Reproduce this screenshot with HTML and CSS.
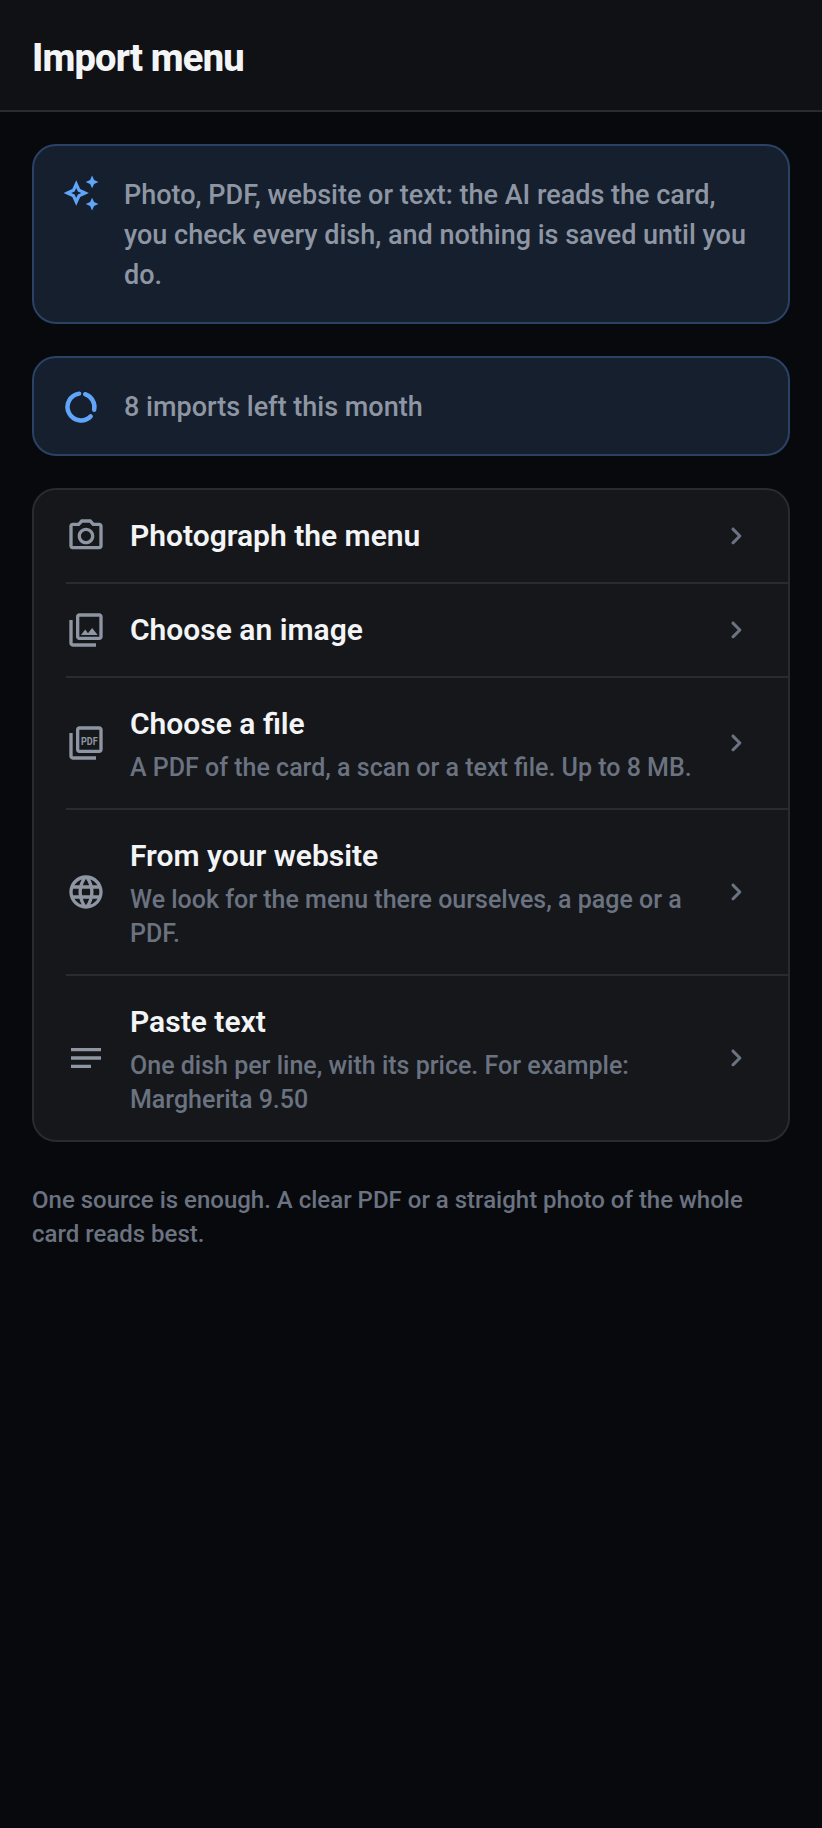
FILE: index.html
```html
<!DOCTYPE html>
<html lang="en">
<head>
    <meta charset="UTF-8">
    <meta name="viewport" content="width=device-width, initial-scale=1.0">
    <title>Import menu</title>
    <link rel="stylesheet" href="styles.css">
</head>
<body>
    <header class="app-bar">
        <h1>Import menu</h1>
    </header>

    <main class="content">
        <section class="notice">
            <svg class="notice-icon" viewBox="0 0 24 24"><path d="M19 9l1.25-2.75L23 5l-2.75-1.25L19 1l-1.25 2.75L15 5l2.75 1.25L19 9zm-7.5.5L9 4 6.5 9.5 1 12l5.5 2.5L9 20l2.5-5.5L17 12l-5.5-2.5zM9.99 12.99L9 15.17l-.99-2.18L5.83 12l2.18-.99L9 8.83l.99 2.18 2.18.99-2.18.99zM19 15l-1.25 2.75L15 19l2.75 1.25L19 23l1.25-2.75L23 19l-2.75-1.25L19 15z"/></svg>
            <p>Photo, PDF, website or text: the AI reads the card, you check every dish, and nothing is saved until you do.</p>
        </section>

        <section class="notice notice-center">
            <svg class="notice-icon ring" viewBox="0 0 24 24"><path d="M14.63 3.92A8.5 8.5 0 0 1 20.31 13.77"/><path d="M18.11 17.9A8.5 8.5 0 1 1 10.82 3.58"/></svg>
            <p>8 imports left this month</p>
        </section>

        <section class="sources">
            <a class="source">
                <svg class="source-icon" viewBox="0 0 24 24"><path d="M14.12 4l1.83 2H20v12H4V6h4.05l1.83-2h4.24M15 2H9L7.17 4H4c-1.1 0-2 .9-2 2v12c0 1.1.9 2 2 2h16c1.1 0 2-.9 2-2V6c0-1.1-.9-2-2-2h-3.17L15 2zm-3 7c1.65 0 3 1.35 3 3s-1.35 3-3 3-3-1.35-3-3 1.35-3 3-3m0-2c-2.76 0-5 2.24-5 5s2.24 5 5 5 5-2.24 5-5-2.24-5-5-5z"/></svg>
                <div class="source-text">
                    <h2>Photograph the menu</h2>
                </div>
                <svg class="chevron" viewBox="0 0 24 24"><path d="M9.29 6.71c-.39.39-.39 1.02 0 1.41L13.17 12l-3.88 3.88c-.39.39-.39 1.02 0 1.41.39.39 1.02.39 1.41 0l4.59-4.59c.39-.39.39-1.02 0-1.41L10.7 6.7c-.38-.38-1.02-.38-1.41.01z"/></svg>
            </a>
            <a class="source">
                <svg class="source-icon" viewBox="0 0 24 24"><path d="M20 4v12H8V4h12m0-2H8c-1.1 0-2 .9-2 2v12c0 1.1.9 2 2 2h12c1.1 0 2-.9 2-2V4c0-1.1-.9-2-2-2zm-8.5 9.67l1.69 2.26 2.48-3.1L19 15H9zM2 6v14c0 1.1.9 2 2 2h14v-2H4V6H2z"/></svg>
                <div class="source-text">
                    <h2>Choose an image</h2>
                </div>
                <svg class="chevron" viewBox="0 0 24 24"><path d="M9.29 6.71c-.39.39-.39 1.02 0 1.41L13.17 12l-3.88 3.88c-.39.39-.39 1.02 0 1.41.39.39 1.02.39 1.41 0l4.59-4.59c.39-.39.39-1.02 0-1.41L10.7 6.7c-.38-.38-1.02-.38-1.41.01z"/></svg>
            </a>
            <a class="source">
                <svg class="source-icon" viewBox="0 0 24 24"><path d="M20 2H8c-1.1 0-2 .9-2 2v12c0 1.1.9 2 2 2h12c1.1 0 2-.9 2-2V4c0-1.1-.9-2-2-2zm0 14H8V4h12v12zM4 6H2v14c0 1.1.9 2 2 2h14v-2H4V6z"/><text class="pdf-mark" x="14" y="13" text-anchor="middle" textLength="10" lengthAdjust="spacingAndGlyphs">PDF</text></svg>
                <div class="source-text">
                    <h2>Choose a file</h2>
                    <p>A PDF of the card, a scan or a text file. Up to 8 MB.</p>
                </div>
                <svg class="chevron" viewBox="0 0 24 24"><path d="M9.29 6.71c-.39.39-.39 1.02 0 1.41L13.17 12l-3.88 3.88c-.39.39-.39 1.02 0 1.41.39.39 1.02.39 1.41 0l4.59-4.59c.39-.39.39-1.02 0-1.41L10.7 6.7c-.38-.38-1.02-.38-1.41.01z"/></svg>
            </a>
            <a class="source">
                <svg class="source-icon" viewBox="0 0 24 24"><path d="M11.99 2C6.47 2 2 6.48 2 12s4.47 10 9.99 10C17.52 22 22 17.52 22 12S17.52 2 11.99 2zm6.93 6h-2.95c-.32-1.25-.78-2.45-1.38-3.56 1.84.63 3.37 1.91 4.33 3.56zM12 4.04c.83 1.2 1.48 2.53 1.91 3.96h-3.82c.43-1.43 1.08-2.76 1.91-3.96zM4.26 14C4.1 13.36 4 12.69 4 12s.1-1.36.26-2h3.38c-.08.66-.14 1.32-.14 2 0 .68.06 1.34.14 2H4.26zm.82 2h2.95c.32 1.25.78 2.45 1.38 3.56-1.84-.63-3.37-1.9-4.33-3.56zm2.95-8H5.08c.96-1.66 2.49-2.93 4.33-3.56C8.81 5.55 8.35 6.75 8.03 8zM12 19.96c-.83-1.2-1.48-2.53-1.91-3.96h3.82c-.43 1.43-1.08 2.76-1.91 3.96zM14.34 14H9.66c-.09-.66-.16-1.32-.16-2 0-.68.07-1.35.16-2h4.68c.09.65.16 1.32.16 2 0 .68-.07 1.34-.16 2zm.25 5.56c.6-1.11 1.06-2.31 1.38-3.56h2.95c-.96 1.65-2.49 2.93-4.33 3.56zM16.36 14c.08-.66.14-1.32.14-2 0-.68-.06-1.34-.14-2h3.38c.16.64.26 1.31.26 2s-.1 1.36-.26 2h-3.38z"/></svg>
                <div class="source-text">
                    <h2>From your website</h2>
                    <p>We look for the menu there ourselves, a page or a PDF.</p>
                </div>
                <svg class="chevron" viewBox="0 0 24 24"><path d="M9.29 6.71c-.39.39-.39 1.02 0 1.41L13.17 12l-3.88 3.88c-.39.39-.39 1.02 0 1.41.39.39 1.02.39 1.41 0l4.59-4.59c.39-.39.39-1.02 0-1.41L10.7 6.7c-.38-.38-1.02-.38-1.41.01z"/></svg>
            </a>
            <a class="source">
                <svg class="source-icon" viewBox="0 0 24 24"><path d="M3 6h18v2H3zM3 11h18v2H3zM3 16h12v2H3z"/></svg>
                <div class="source-text">
                    <h2>Paste text</h2>
                    <p>One dish per line, with its price. For example: Margherita 9.50</p>
                </div>
                <svg class="chevron" viewBox="0 0 24 24"><path d="M9.29 6.71c-.39.39-.39 1.02 0 1.41L13.17 12l-3.88 3.88c-.39.39-.39 1.02 0 1.41.39.39 1.02.39 1.41 0l4.59-4.59c.39-.39.39-1.02 0-1.41L10.7 6.7c-.38-.38-1.02-.38-1.41.01z"/></svg>
            </a>
        </section>

        <p class="hint">One source is enough. A clear PDF or a straight photo of the whole card reads best.</p>
    </main>
</body>
</html>
```

FILE: styles.css
```css
* {
    margin: 0;
    padding: 0;
    box-sizing: border-box;
}

body {
    min-height: 1828px;
    background-color: #08090d;
    font-family: Roboto, "Liberation Sans", sans-serif;
}

/* Top bar */
.app-bar {
    height: 112px;
    padding: 37px 32px 0;
    background-color: #101114;
    border-bottom: 2px solid #282b30;
}

.app-bar h1 {
    font-size: 38px;
    line-height: 42px;
    font-weight: 800;
    color: #f3f4f6;
    letter-spacing: -0.8px;
}

.content {
    display: flex;
    flex-direction: column;
    gap: 32px;
    padding: 32px;
}

/* Blue notices */
.notice {
    display: flex;
    align-items: flex-start;
    gap: 24px;
    padding: 28px 32px 27px 28px;
    background-color: #151f2d;
    border: 2px solid #2a4365;
    border-radius: 24px;
}

.notice-center {
    align-items: center;
}

.notice p {
    padding-top: 1px;
    font-size: 27px;
    line-height: 40px;
    font-weight: 500;
    color: #8f96a3;
}

.notice-icon {
    flex-shrink: 0;
    width: 38px;
    height: 38px;
    fill: #60a5fa;
}

.ring {
    fill: none;
    stroke: #60a5fa;
    stroke-width: 2.8;
    stroke-linecap: round;
}

/* Source list */
.sources {
    background-color: #15171b;
    border: 2px solid #282b30;
    border-radius: 24px;
    overflow: hidden;
}

.source {
    display: flex;
    align-items: center;
    gap: 24px;
    min-height: 94px;
    margin-left: 32px;
    padding: 23px 34px 24px 0;
    border-top: 2px solid #282b30;
}

.source:first-child {
    min-height: 92px;
    border-top: none;
}

.source-icon {
    flex-shrink: 0;
    width: 40px;
    height: 40px;
    fill: #8f96a3;
}

.pdf-mark {
    font-size: 7px;
    font-weight: 700;
    fill: #8f96a3;
}

.source-text {
    flex: 1;
}

.source-text:has(p) {
    padding-top: 4px;
    margin-bottom: -1px;
}

.source-text h2 {
    font-size: 30px;
    line-height: 38px;
    font-weight: 600;
    color: #f3f4f6;
}

.source-text p {
    margin-top: 8px;
    font-size: 25px;
    line-height: 34px;
    font-weight: 500;
    color: #6b7280;
}

.chevron {
    flex-shrink: 0;
    width: 36px;
    height: 36px;
    fill: #6b7280;
}

.hint {
    margin-top: 9px;
    font-size: 24px;
    line-height: 34px;
    font-weight: 500;
    color: #6b7280;
}
```
